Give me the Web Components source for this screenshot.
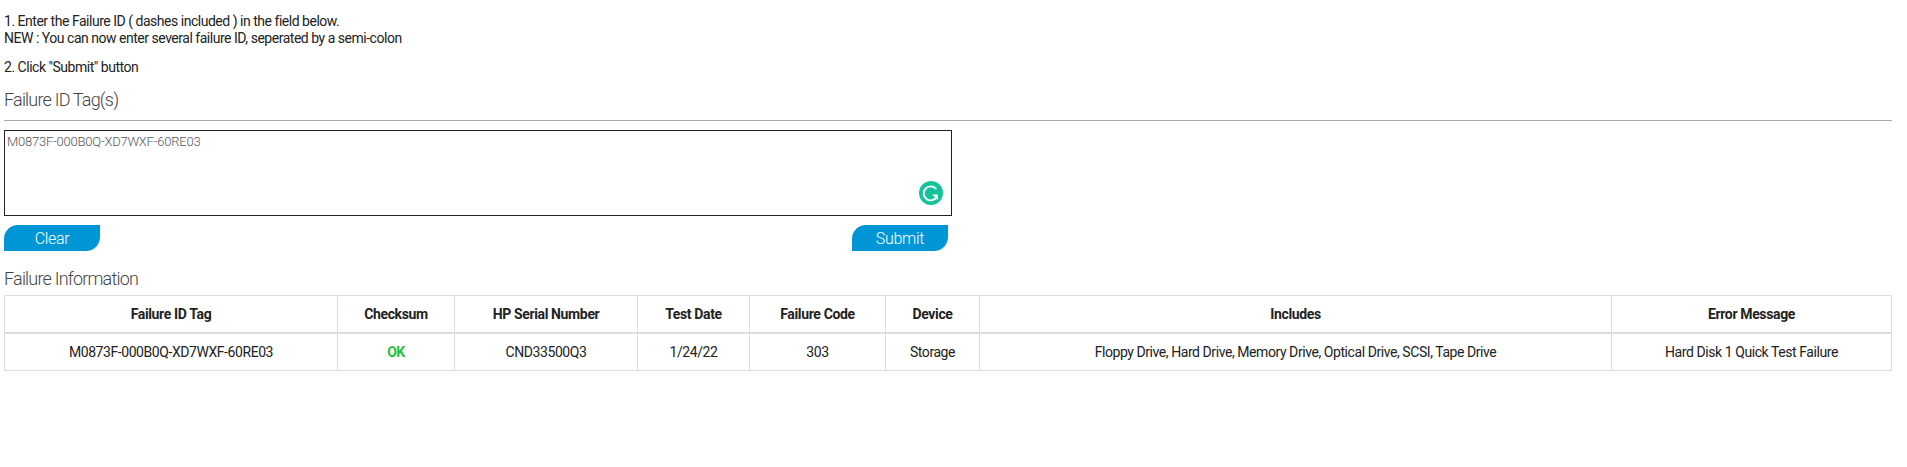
<!DOCTYPE html>
<html lang="en">
<head>
<meta charset="utf-8">
<title>Failure ID</title>
<style>
  html, body { margin: 0; background: #fff; }
  body { padding: 0 15px 0 4px; font-family: Roboto, "Liberation Sans", sans-serif; color: #222; }
</style>
</head>
<body>
<failure-instructions>
  <p>1. Enter the Failure ID ( dashes included ) in the field below.<br>NEW : You can now enter several failure ID, seperated by a semi-colon</p>
  <p>2. Click "Submit" button</p>
</failure-instructions>
<section-title underlined>Failure ID Tag(s)</section-title>
<failure-form value="M0873F-000B0Q-XD7WXF-60RE03"></failure-form>
<section-title>Failure Information</section-title>
<failure-table></failure-table>

<script>
class FailureInstructions extends HTMLElement {
  constructor () {
    super();
    this.attachShadow({ mode: "open" });
  }

  connectedCallback () {
    this.shadowRoot.innerHTML = `
    <style>
      :host {
        display: block;
        padding-top: 13px;
        font-size: 14px;
        line-height: 17px;
        letter-spacing: -.48px;
        color: #222;
      }
      ::slotted(p) { margin: 0 0 12px; }
    </style>
    <slot></slot>
    `;
  }
}

class SectionTitle extends HTMLElement {
  constructor () {
    super();
    this.attachShadow({ mode: "open" });
  }

  connectedCallback () {
    this.shadowRoot.innerHTML = `
    <style>
      :host {
        display: block;
        font-size: 18px;
        font-weight: 300;
        line-height: 24px;
        letter-spacing: -.8px;
        color: #444;
      }
      :host([underlined]) {
        border-bottom: 1px solid #aaa;
        padding-bottom: 8px;
      }
    </style>
    <slot></slot>
    `;
  }
}

class PillButton extends HTMLElement {
  constructor () {
    super();
    this.attachShadow({ mode: "open" });
  }

  connectedCallback () {
    this.shadowRoot.innerHTML = `
    <style>
      :host {
        display: flex;
        align-items: center;
        justify-content: center;
        width: 96px;
        height: 26px;
        background: #0096d6;
        border-radius: 14px 0 14px 0;
        color: #fff;
        font-size: 16px;
        font-weight: 300;
        letter-spacing: -.3px;
      }
    </style>
    <slot></slot>
    `;
  }
}

class FailureForm extends HTMLElement {
  constructor () {
    super();
    this.attachShadow({ mode: "open" });
  }

  connectedCallback () {
    this.shadowRoot.innerHTML = `
    <style>
      :host {
        display: block;
        width: 948px;
        padding: 9px 0 16px;
      }
      .box {
        position: relative;
        box-sizing: border-box;
        height: 86px;
        border: 1px solid #222;
        padding: 3px 2px;
        font-size: 13px;
        line-height: 16px;
        letter-spacing: -.22px;
        font-weight: 300;
        color: #555;
      }
      .grammarly {
        position: absolute;
        right: 8px;
        bottom: 10px;
        width: 24px;
        height: 24px;
      }
      .actions {
        display: flex;
        justify-content: space-between;
        padding: 9px 4px 0 0;
      }
    </style>
    <div class="box">
      <span class="value"></span>
      <svg class="grammarly" viewBox="0 0 24 24">
        <circle cx="12" cy="12" r="12" fill="#15c39a"/>
        <path d="M16.8 7.6A7 7 0 1 0 17.6 16.2" fill="none" stroke="#fff" stroke-width="1.9" stroke-linecap="round"/>
        <path d="M13.2 13.6H18.8V19.2z" fill="#fff"/>
      </svg>
    </div>
    <div class="actions">
      <pill-button>Clear</pill-button>
      <pill-button>Submit</pill-button>
    </div>
    `;
    this.shadowRoot.querySelector(".value").textContent = this.getAttribute("value");
  }
}

class FailureTable extends HTMLElement {
  constructor () {
    super();
    this.attachShadow({ mode: "open" });
  }

  connectedCallback () {
    const columnas = [
      ["Failure ID Tag", 333, "M0873F-000B0Q-XD7WXF-60RE03"],
      ["Checksum", 117, "OK"],
      ["HP Serial Number", 183, "CND33500Q3"],
      ["Test Date", 112, "1/24/22"],
      ["Failure Code", 136, "303"],
      ["Device", 94, "Storage"],
      ["Includes", 632, "Floppy Drive, Hard Drive, Memory Drive, Optical Drive, SCSI, Tape Drive"],
      ["Error Message", 280, "Hard Disk 1 Quick Test Failure"]
    ];

    this.shadowRoot.innerHTML = `
    <style>
      :host {
        display: block;
        padding-top: 4px;
        font-size: 14px;
        letter-spacing: -.43px;
        color: #222;
      }
      table {
        table-layout: fixed;
        width: 1887px;
        border-collapse: collapse;
        border: 1px solid #ddd;
      }
      th, td {
        padding: 0;
        border: 1px solid #ddd;
        text-align: center;
      }
      th { height: 36px; border-bottom-width: 2px; font-weight: 700; letter-spacing: -.36px; }
      td { height: 36px; font-weight: 400; }
      .ok { color: #1ec337; font-weight: 700; }
    </style>
    <table>
      <colgroup>${columnas.map(c => `<col style="width:${c[1]}px">`).join("")}</colgroup>
      <thead><tr>${columnas.map(c => `<th>${c[0]}</th>`).join("")}</tr></thead>
      <tbody><tr>${columnas.map(c => `<td class="${c[2] === "OK" ? "ok" : ""}">${c[2]}</td>`).join("")}</tr></tbody>
    </table>
    `;
  }
}

customElements.define("failure-instructions", FailureInstructions);
customElements.define("section-title", SectionTitle);
customElements.define("pill-button", PillButton);
customElements.define("failure-form", FailureForm);
customElements.define("failure-table", FailureTable);
</script>
</body>
</html>
